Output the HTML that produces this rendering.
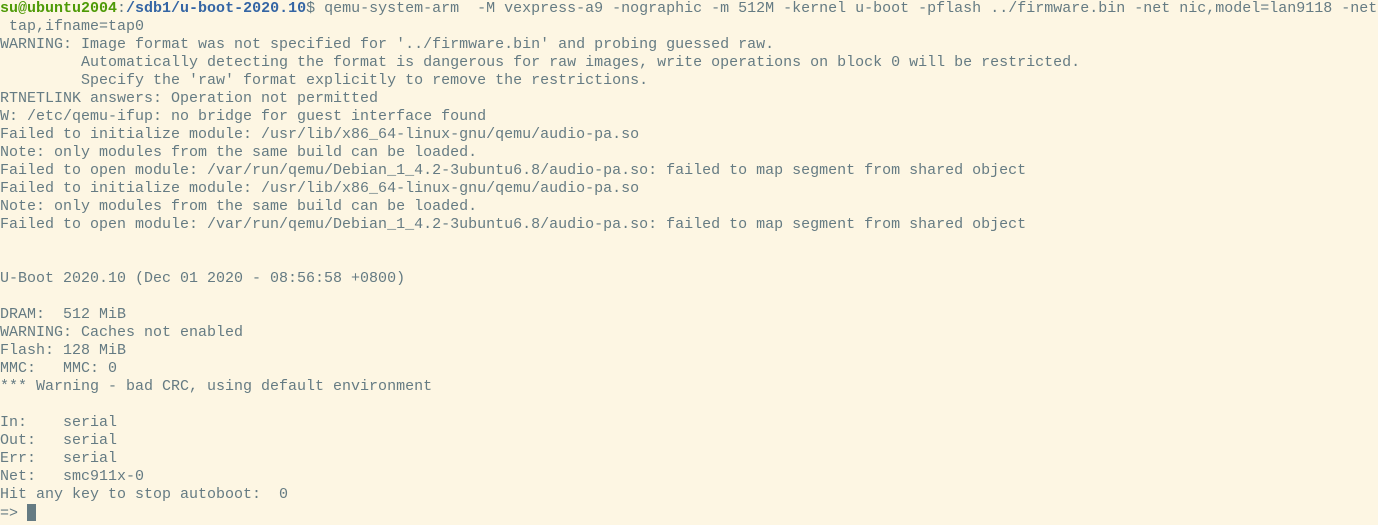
<!DOCTYPE html>
<html><head><style>
html,body{margin:0;padding:0;background:#fdf6e3;width:1378px;height:525px;overflow:hidden}
pre{margin:0;padding:0 0 0 0;font-family:"Liberation Mono",monospace;font-size:15px;line-height:18px;color:#657b83;white-space:pre}
.g{color:#4e9a06;font-weight:bold}.b{color:#3465a4;font-weight:bold}
.c{display:inline-block;width:9px;height:17px;background:#657b83;vertical-align:-4px}
</style></head><body><pre><span class="g">su@ubuntu2004</span>:<span class="b">/sdb1/u-boot-2020.10</span>$ qemu-system-arm  -M vexpress-a9 -nographic -m 512M -kernel u-boot -pflash ../firmware.bin -net nic,model=lan9118 -net
 tap,ifname=tap0
WARNING: Image format was not specified for '../firmware.bin' and probing guessed raw.
         Automatically detecting the format is dangerous for raw images, write operations on block 0 will be restricted.
         Specify the 'raw' format explicitly to remove the restrictions.
RTNETLINK answers: Operation not permitted
W: /etc/qemu-ifup: no bridge for guest interface found
Failed to initialize module: /usr/lib/x86_64-linux-gnu/qemu/audio-pa.so
Note: only modules from the same build can be loaded.
Failed to open module: /var/run/qemu/Debian_1_4.2-3ubuntu6.8/audio-pa.so: failed to map segment from shared object
Failed to initialize module: /usr/lib/x86_64-linux-gnu/qemu/audio-pa.so
Note: only modules from the same build can be loaded.
Failed to open module: /var/run/qemu/Debian_1_4.2-3ubuntu6.8/audio-pa.so: failed to map segment from shared object


U-Boot 2020.10 (Dec 01 2020 - 08:56:58 +0800)

DRAM:  512 MiB
WARNING: Caches not enabled
Flash: 128 MiB
MMC:   MMC: 0
*** Warning - bad CRC, using default environment

In:    serial
Out:   serial
Err:   serial
Net:   smc911x-0
Hit any key to stop autoboot:  0 
=&gt; <span class="c"></span></pre></body></html>
